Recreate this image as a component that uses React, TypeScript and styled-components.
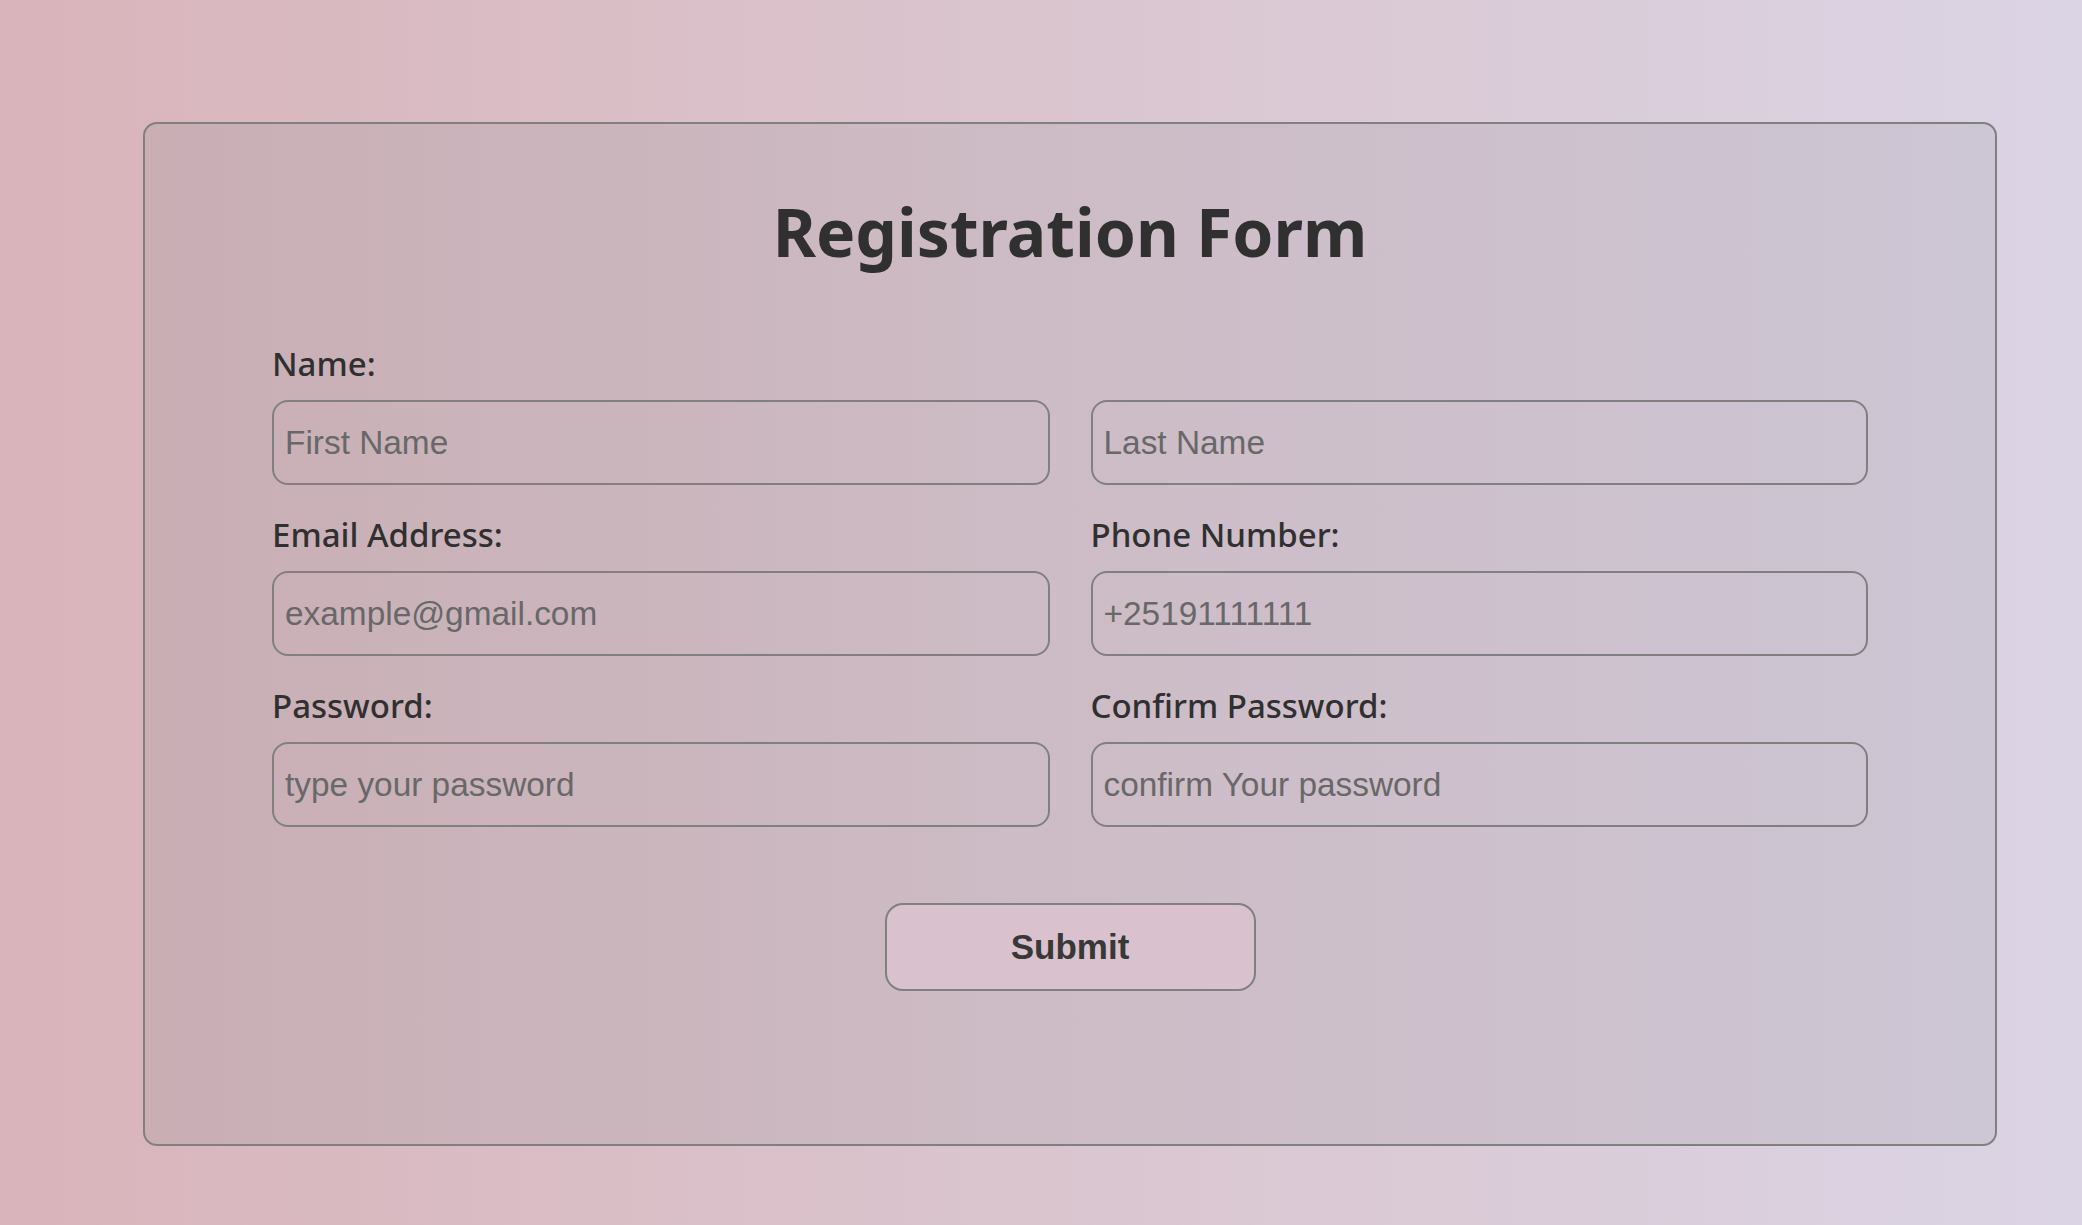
import React from "react";
import styled, { createGlobalStyle } from "styled-components";

const GlobalStyle = createGlobalStyle`
  * { box-sizing: border-box; }
  html, body { margin: 0; padding: 0; }
  body {
    min-height: 100vh;
    background: linear-gradient(to right, #d9b4ba 0%, #dac5cf 50%, #dbd4e4 100%);
    font-family: "Noto Sans", "Open Sans", sans-serif;
  }
`;

const Page = styled.div`
  min-height: 100vh;
  padding: 122px 85px 40px 143px;
`;

const Card = styled.form`
  width: 1854px;
  border: 2px solid #808080;
  border-radius: 14px;
  background: linear-gradient(to right, #c9aeb4 0%, #cdbcc6 50%, #cdc6d4 100%);
  padding: 74px 127px 153px;
  display: flex;
  flex-direction: column;
`;

const Title = styled.h1`
  margin: 0 0 83px;
  text-align: center;
  font-family: "Noto Sans", "Open Sans", sans-serif;
  font-weight: 700;
  font-size: 66px;
  line-height: 66px;
  color: #303030;
`;

const Grid = styled.div`
  display: grid;
  grid-template-columns: 1fr 1fr;
  column-gap: 41px;
  row-gap: 33px;
`;

const Field = styled.div<{ $span?: boolean }>`
  display: flex;
  flex-direction: column;
  gap: 19px;
  grid-column: ${(p) => (p.$span ? "1 / span 2" : "auto")};
`;

const Label = styled.label`
  font-family: "Noto Sans", "Open Sans", sans-serif;
  font-weight: 500;
  font-size: 33px;
  line-height: 34px;
  color: #303030;
`;

const Pair = styled.div`
  display: grid;
  grid-template-columns: 1fr 1fr;
  column-gap: 41px;
`;

const Input = styled.input`
  width: 100%;
  height: 85px;
  border: 2px solid #808080;
  border-radius: 16px;
  background: transparent;
  padding: 0 11px;
  font-family: "Liberation Sans", Arial, sans-serif;
  font-size: 33.4px;
  color: #333;
  outline: none;
  &::placeholder {
    color: #686868;
  }
`;

const Actions = styled.div`
  display: flex;
  justify-content: center;
  margin-top: 76px;
`;

const SubmitButton = styled.button`
  width: 371px;
  height: 88px;
  border: 2px solid #808080;
  border-radius: 18px;
  background: #d9c2ce;
  font-family: "Liberation Sans", Arial, sans-serif;
  font-weight: 700;
  font-size: 35px;
  color: #383838;
  cursor: pointer;
`;

export default function App() {
  return (
    <>
      <GlobalStyle />
      <Page>
        <Card onSubmit={(e) => e.preventDefault()}>
          <Title>Registration Form</Title>
          <Grid>
            <Field $span>
              <Label>Name:</Label>
              <Pair>
                <Input type="text" placeholder="First Name" />
                <Input type="text" placeholder="Last Name" />
              </Pair>
            </Field>
            <Field>
              <Label>Email Address:</Label>
              <Input type="email" placeholder="example@gmail.com" />
            </Field>
            <Field>
              <Label>Phone Number:</Label>
              <Input type="tel" placeholder="+25191111111" />
            </Field>
            <Field>
              <Label>Password:</Label>
              <Input type="password" placeholder="type your password" />
            </Field>
            <Field>
              <Label>Confirm Password:</Label>
              <Input type="password" placeholder="confirm Your password" />
            </Field>
          </Grid>
          <Actions>
            <SubmitButton type="submit">Submit</SubmitButton>
          </Actions>
        </Card>
      </Page>
    </>
  );
}
